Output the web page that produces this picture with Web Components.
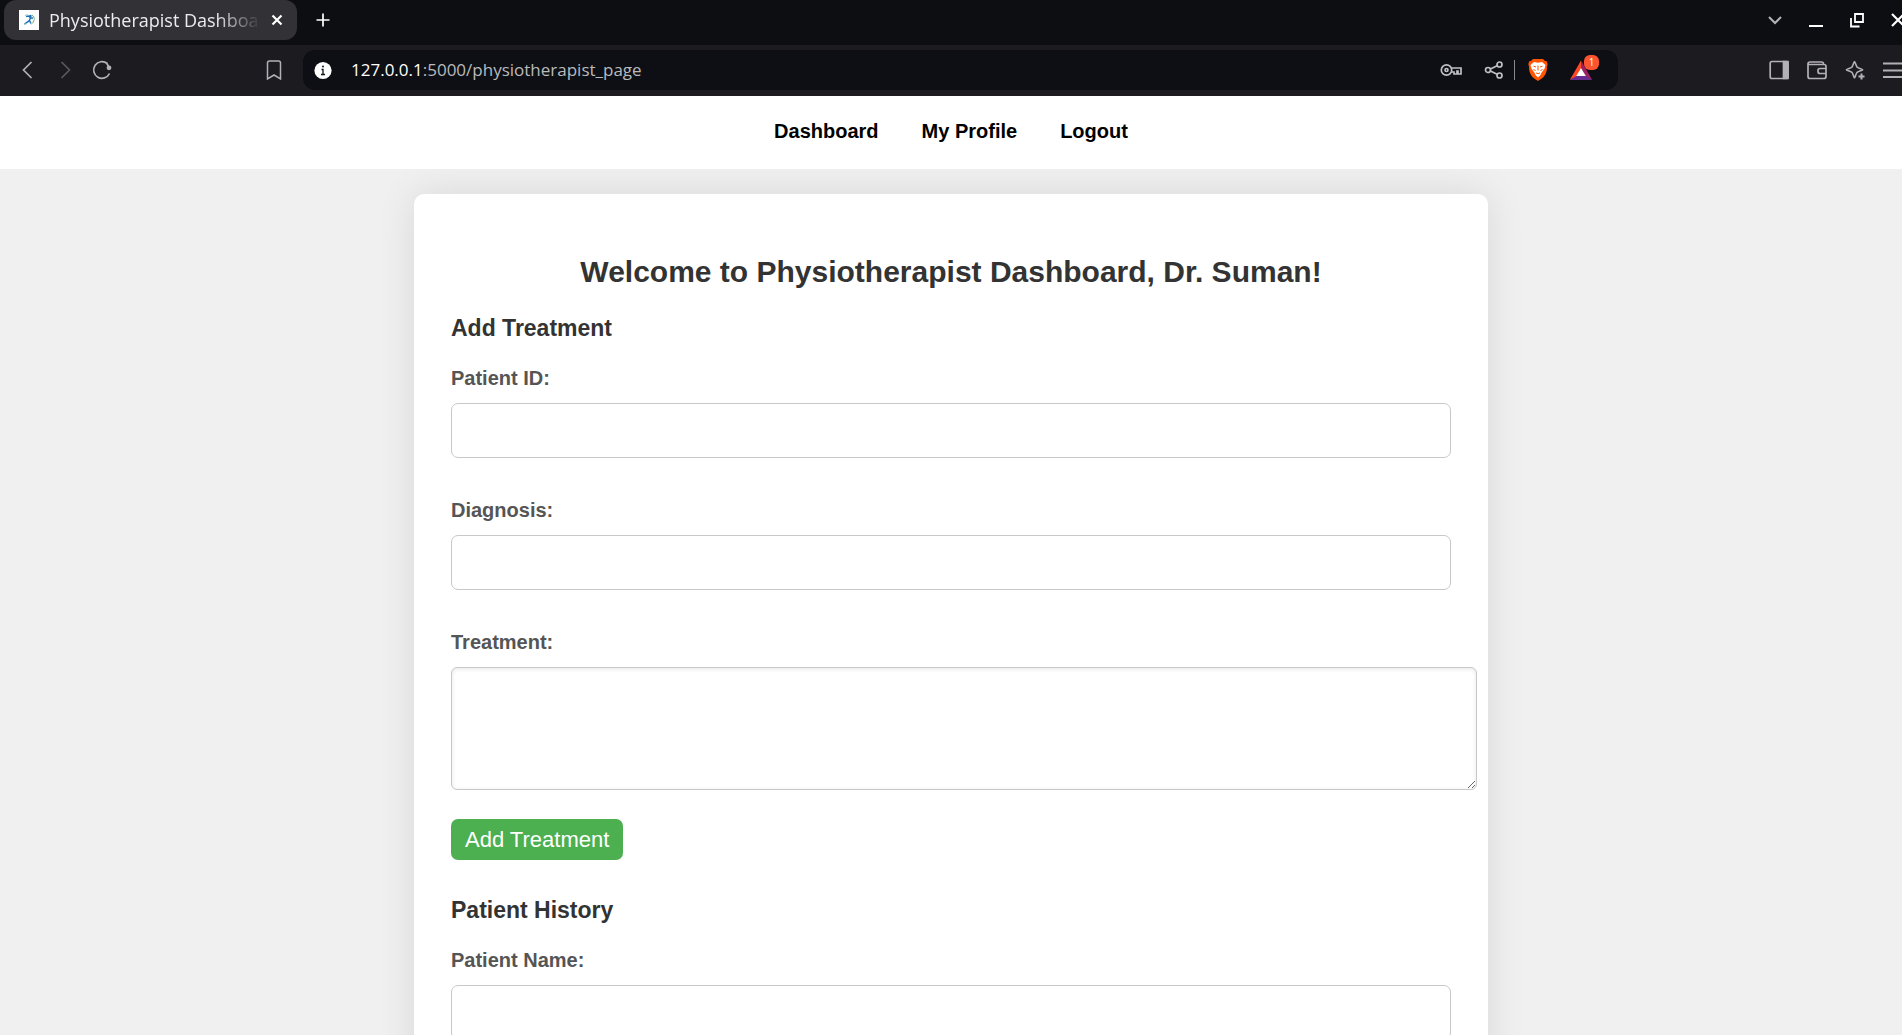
<!DOCTYPE html>
<html lang="en">
<head>
<meta charset="utf-8">
<title>Physiotherapist Dashboard</title>
<style>
  html, body { height: 100%; }
  body { margin: 0; overflow: hidden; display: flex; flex-direction: column; background: #f0f0f0; font-family: "Liberation Sans", Arial, sans-serif; }
</style>
</head>
<body>
<browser-chrome></browser-chrome>
<dashboard-page></dashboard-page>

<script>
const ICONS = {
  close: '<path d="M7.500 7.500l9 9M16.500 7.500l-9 9" stroke-width="2.2"/>',
  plus: '<path d="M12 5.500v13M5.500 12h13" stroke-width="1.700"/>',
  chevron: '<path d="M6 9l6 6 6-6" stroke-width="2"/>',
  minimize: '<path d="M5 18h14" stroke-width="2"/>',
  restore: '<path d="M10 6h8v8h-8zM6 10v8.500h8.500" stroke-width="1.800" stroke-linejoin="miter"/>',
  windowClose: '<path d="M6 6l12 12M18 6L6 18" stroke-width="2.200"/>',
  back: '<path d="M15.500 4l-8 8 8 8"/>',
  forward: '<path d="M8.500 4l8 8-8 8"/>',
  reload: '<path d="M19.500 15.500A8.300 8.300 0 1 1 17.200 5.500"/><circle cx="19" cy="9.800" r="2.400" fill="currentColor" stroke="none"/><path d="M16.500 5l3 5"/>',
  bookmark: '<path d="M5.500 5a2 2 0 0 1 2-2h9a2 2 0 0 1 2 2v16L12 17l-6.500 4z" stroke-width="1.500"/>',
  info: '<circle cx="12" cy="12.500" r="8.600" fill="#fff" stroke="none"/><path d="M10.500 11.500H12v5M10 16.500h4" stroke="#111216" stroke-width="1.300"/><circle cx="12" cy="8.500" r="1" fill="#111216" stroke="none"/>',
  key: '<circle cx="7.500" cy="12" r="5.200"/><circle cx="7.500" cy="12" r="1.500"/><path d="M12.500 10H22v6h-3v-3h-1v3h-3v-2h-3"/>',
  share: '<circle cx="6" cy="12" r="2.500"/><circle cx="17.500" cy="6.500" r="2.500"/><circle cx="17.500" cy="17.500" r="2.500"/><path d="M8.400 11l6.700-3.300M8.400 13l6.700 3.300"/>',
  brave: '<path d="M7 1h10l2 2 1.500 0 1.200 3-.7 2.500c0 7-2.500 10.800-9 14.500C5.500 19.300 3 15.500 3 8.500L2.300 6l1.200-3L5 3z" fill="#ff5500" stroke="none"/><path d="M8 4l4 .8L16 4l3.500 3-1 3.800-3 4-1 2.200L12 19.500 9.500 17l-1-2.200-3-4-1-3.800z" fill="#fff" stroke="none"/><path d="M7.500 8.200l2.500.8M16.500 8.200l-2.500.8M12 7.500v5M10 14.800l2 1 2-1M7.500 11.500l2 1M16.500 11.500l-2 1" stroke="#ff5500" stroke-width="1"/>',
  rewards: '<path d="M12 2.500L.8 22 7.500 18.500 12 10z" fill="#ff4724" stroke="none"/><path d="M12 2.500L23.200 22l-6.700-3.500L12 10z" fill="#9e1f63" stroke="none"/><path d="M.8 22h22.400l-6.700-4h-9z" fill="#662d91" stroke="none"/><path d="M12 10l4.800 8H7.200z" fill="#fff" stroke="none"/>',
  sidebar: '<path d="M16.500 3.500H21v17h-4.500z" fill="currentColor"/><rect x="3.200" y="3.500" width="17.800" height="17" rx="1.800"/>',
  wallet: '<path d="M3 6v12.500a2 2 0 0 0 2 2h14a2 2 0 0 0 2-2v-10a2 2 0 0 0-2-2H3.500M3 6a2 2 0 0 1 2-2h11.500a2 2 0 0 1 2 2M21 10.500h-6a2 2 0 0 0-2 2v1a2 2 0 0 0 2 2h6"/>',
  sparkle: '<path d="M11.500 3.500c.7 0 1.300 4.200 2.600 5.600 1.400 1.300 5.600 1.900 5.600 2.600s-4.200 1.300-5.600 2.600c-1.300 1.400-1.900 5.600-2.600 5.600s-1.300-4.200-2.600-5.600C7.500 13 3.300 12.400 3.300 11.700s4.200-1.300 5.600-2.600c1.300-1.400 1.900-5.600 2.600-5.600z" stroke-width="1.600"/><path d="M18.500 15.500v6M15.500 18.500h6" stroke-width="2"/>',
  menu: '<path d="M2 5.500h20M2 12.500h20M2 19h20" stroke-width="1.800"/>',
  favicon: '<path d="M2 2h20v20H2z" fill="#fff" stroke="none"/><path d="M9 8.500l3-.5 1.500 2-1.500 3-2.500 1.500-2 1.500M12.500 12.500l1.500 3M13.500 10l2.500 0" stroke="#1d72b8" stroke-width="1.500"/><circle cx="13.500" cy="8" r="1.200" fill="#1d72b8" stroke="none"/><path d="M15 7c3.500 2 2.500 7-.5 9" stroke="#65b36a" stroke-width="1"/><path d="M7 16.500l3-1M8 7.500l3-.8" stroke="#8fc7c5" stroke-width="1"/>'
};

class UiIcon extends HTMLElement {
  constructor() {
    super();
    this.attachShadow({ mode: 'open' });
  }
  connectedCallback() {
    this.shadowRoot.innerHTML = `
      <style>
        :host { display: block; width: 24px; height: 24px; flex: none; }
        svg { display: block; width: 100%; height: 100%; overflow: visible; }
      </style>
      <svg viewBox="0 0 24 24" fill="none" stroke="currentColor" stroke-width="1.700" aria-hidden="true">${ICONS[this.getAttribute('name')]}</svg>`;
  }
}
customElements.define('ui-icon', UiIcon);

class IconButton extends HTMLElement {
  constructor() {
    super();
    this.attachShadow({ mode: 'open' });
  }
  connectedCallback() {
    this.shadowRoot.innerHTML = `
      <style>
        :host { display: block; flex: none; }
        button { display: block; margin: 0; padding: 0; border: 0; background: none; color: inherit; }
      </style>
      <button type="button" aria-label="${this.getAttribute('label')}"><ui-icon name="${this.getAttribute('icon')}"></ui-icon></button>`;
  }
}
customElements.define('icon-button', IconButton);

class TabStrip extends HTMLElement {
  constructor() {
    super();
    this.attachShadow({ mode: 'open' }).innerHTML = `
      <style>
        :host { display: flex; justify-content: space-between; height: 45px; background: #0d0e12; color: #fff; overflow: hidden; }
        .tabs, .window { display: flex; align-items: center; height: 40px; }
        .tabs { gap: 14px; padding-left: 4px; }
        .tab { display: flex; align-items: center; box-sizing: border-box; width: 293px; height: 40px; padding: 0 8px 0 13px; border-radius: 12px; background: #323136; }
        .title { flex: 1; min-width: 0; margin: 0 8px; overflow: hidden; white-space: nowrap; font: 18px/24px "Open Sans", "Noto Sans", sans-serif; color: #ececee; -webkit-mask-image: linear-gradient(90deg, #000 80%, transparent 102%); mask-image: linear-gradient(90deg, #000 80%, transparent 102%); }
        .window { gap: 17px; margin-right: -8px; }
        .dim { color: #b4b4b8; }
      </style>
      <div class="tabs">
        <div class="tab">
          <ui-icon name="favicon"></ui-icon>
          <span class="title"><slot></slot></span>
          <icon-button icon="close" label="Close tab"></icon-button>
        </div>
        <icon-button icon="plus" label="New tab"></icon-button>
      </div>
      <div class="window">
        <icon-button class="dim" icon="chevron" label="Search tabs"></icon-button>
        <icon-button icon="minimize" label="Minimize"></icon-button>
        <icon-button icon="restore" label="Restore"></icon-button>
        <icon-button icon="windowClose" label="Close window"></icon-button>
      </div>`;
  }
}
customElements.define('tab-strip', TabStrip);

class AddressBar extends HTMLElement {
  constructor() {
    super();
    this.attachShadow({ mode: 'open' }).innerHTML = `
      <style>
        :host { display: flex; align-items: center; box-sizing: border-box; flex: 1; min-width: 0; height: 40px; padding: 0 25px 0 8px; border-radius: 12px; background: #0e0f14; color: #c0c0c4; }
        .url { display: flex; flex: 1; min-width: 0; margin-left: 16px; font: 17px/24px "Open Sans", "Noto Sans", sans-serif; }
        label { color: #fff; }
        input { flex: 1; min-width: 0; height: 24px; margin: 0; padding: 0; border: 0; outline: 0; background: none; color: #b9babd; font: inherit; }
        .actions { display: flex; align-items: center; gap: 19px; }
        .shields { display: flex; align-items: center; gap: 11px; margin-left: -11px; }
        .rule { width: 1px; height: 20px; background: #88888c; }
        .rewards { position: relative; }
        .badge { position: absolute; left: 15px; top: -3px; width: 15px; height: 15px; border-radius: 6px; background: #ff5430; color: #fff; font: 10px/15px "Open Sans", sans-serif; text-align: center; }
      </style>
      <icon-button icon="info" label="Site information"></icon-button>
      <div class="url"><label for="path">127.0.0.1</label><input id="path" type="text" value=":5000/physiotherapist_page"></div>
      <div class="actions">
        <icon-button icon="key" label="Manage passwords"></icon-button>
        <icon-button icon="share" label="Share this page"></icon-button>
        <div class="shields">
          <span class="rule"></span>
          <icon-button icon="brave" label="Shields"></icon-button>
        </div>
        <div class="rewards">
          <icon-button icon="rewards" label="Rewards"></icon-button>
          <span class="badge">1</span>
        </div>
      </div>`;
  }
}
customElements.define('address-bar', AddressBar);

class BrowserChrome extends HTMLElement {
  constructor() {
    super();
    this.attachShadow({ mode: 'open' }).innerHTML = `
      <style>
        :host { display: block; flex: none; overflow: hidden; }
        .toolbar { display: flex; align-items: center; box-sizing: border-box; height: 51px; padding-bottom: 1px; background: #1c1b20; color: #b2b1b6; }
        .group { display: flex; align-items: center; }
        .nav { gap: 13px; margin: 0 148px 0 16px; }
        .tools { gap: 14px; margin: 0 -3px 0 149px; }
        .off { color: #59595e; }
        .mark { margin-right: 17px; }
      </style>
      <tab-strip>Physiotherapist Dashboard</tab-strip>
      <div class="toolbar">
        <div class="group nav">
          <icon-button icon="back" label="Back"></icon-button>
          <icon-button class="off" icon="forward" label="Forward"></icon-button>
          <icon-button icon="reload" label="Reload"></icon-button>
        </div>
        <icon-button class="mark" icon="bookmark" label="Bookmark this page"></icon-button>
        <address-bar></address-bar>
        <div class="group tools">
          <icon-button icon="sidebar" label="Sidebar"></icon-button>
          <icon-button icon="wallet" label="Wallet"></icon-button>
          <icon-button icon="sparkle" label="Assistant"></icon-button>
          <icon-button icon="menu" label="Menu"></icon-button>
        </div>
      </div>`;
  }
}
customElements.define('browser-chrome', BrowserChrome);

class SiteNav extends HTMLElement {
  constructor() {
    super();
    this.attachShadow({ mode: 'open' }).innerHTML = `
      <style>
        :host { display: block; background: #fff; }
        nav { display: flex; justify-content: center; gap: 43px; padding: 23px 0 26px; }
        a { color: #000; font-size: 20px; line-height: 24px; font-weight: bold; text-decoration: none; }
      </style>
      <nav><a href="#dashboard">Dashboard</a><a href="#profile">My Profile</a><a href="#logout">Logout</a></nav>`;
  }
}
customElements.define('site-nav', SiteNav);

class FormField extends HTMLElement {
  constructor() {
    super();
    this.attachShadow({ mode: 'open' });
  }
  connectedCallback() {
    const control = this.hasAttribute('multiline')
      ? '<textarea id="control"></textarea>'
      : '<input id="control" type="text">';
    this.shadowRoot.innerHTML = `
      <style>
        :host { display: block; }
        label { display: block; margin-bottom: 13px; color: #555; font-size: 20px; line-height: 24px; font-weight: bold; }
        input, textarea { display: block; margin: 0; border: 1px solid #c8c8c8; background: #fff; font: 20px/24px "Liberation Sans", Arial, sans-serif; }
        input { box-sizing: border-box; width: 100%; height: 55px; padding: 12px; border-radius: 7px; }
        textarea { width: 100%; height: 97px; padding: 12px; border-radius: 6px; resize: vertical; box-shadow: inset 0 1px 4px rgba(0, 0, 0, .1); }
      </style>
      <label for="control">${this.getAttribute('label')}</label>${control}`;
  }
}
customElements.define('form-field', FormField);

class FormSection extends HTMLElement {
  constructor() {
    super();
    this.attachShadow({ mode: 'open' }).innerHTML = `
      <style>
        :host { display: block; }
        h3 { margin: 0 0 24px; font-size: 23px; line-height: 28px; }
        .fields { display: flex; flex-direction: column; gap: 40px; }
        ::slotted(button) { display: block; margin: 29px 0 36px; height: 41px; padding: 0 14px; border: 0; border-radius: 7px; background: #4caf50; color: #fff; font: 22px/26px "Liberation Sans", Arial, sans-serif; }
      </style>
      <h3><slot name="heading"></slot></h3>
      <div class="fields"><slot></slot></div>
      <slot name="action"></slot>`;
  }
}
customElements.define('form-section', FormSection);

class DashboardPage extends HTMLElement {
  constructor() {
    super();
    this.attachShadow({ mode: 'open' }).innerHTML = `
      <style>
        :host { display: block; flex: 1; min-height: 0; overflow: hidden; background: #f0f0f0; }
        site-nav { position: relative; z-index: 1; }
        main { max-width: 1000px; margin: 25px auto; padding: 61px 37px 37px; border-radius: 10px; background: #fff; color: #333; box-shadow: 0 0 38px rgba(0, 0, 0, .1); }
        h2 { margin: 0 0 25px; font-size: 30px; line-height: 34px; text-align: center; }
      </style>
      <site-nav></site-nav>
      <main>
        <h2>Welcome to Physiotherapist Dashboard, Dr. Suman!</h2>
        <form-section>
          <span slot="heading">Add Treatment</span>
          <form-field label="Patient ID:"></form-field>
          <form-field label="Diagnosis:"></form-field>
          <form-field label="Treatment:" multiline></form-field>
          <button slot="action" type="button">Add Treatment</button>
        </form-section>
        <form-section>
          <span slot="heading">Patient History</span>
          <form-field label="Patient Name:"></form-field>
        </form-section>
      </main>`;
  }
}
customElements.define('dashboard-page', DashboardPage);
</script>
</body>
</html>
